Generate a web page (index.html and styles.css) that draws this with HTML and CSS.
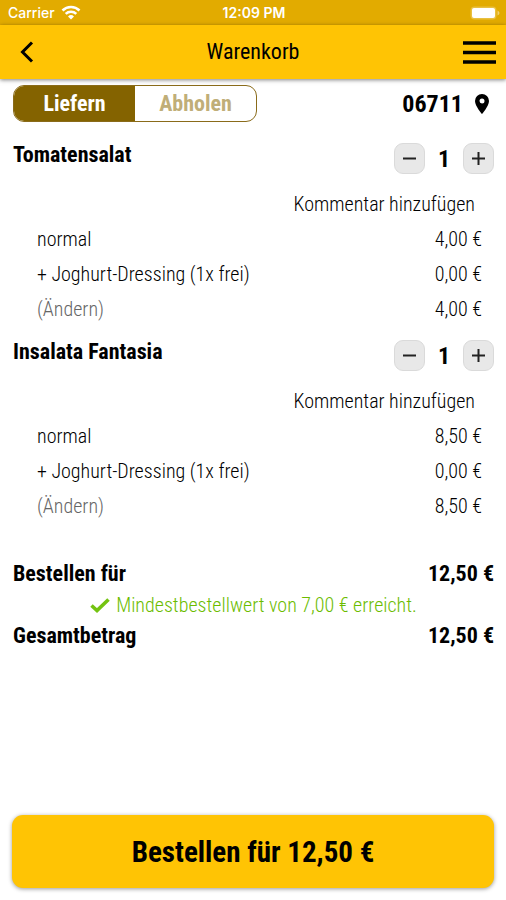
FILE: index.html
```html
<!DOCTYPE html>
<html lang="de">
<head>
<meta charset="utf-8">
<meta name="viewport" content="width=device-width, initial-scale=1">
<title>Warenkorb</title>
<link rel="stylesheet" href="styles.css">
</head>
<body>
<div class="app">
  <div class="status">
    <span class="carrier">Carrier
      <svg width="20" height="15" viewBox="0 0 20 15" aria-hidden="true"><g fill="none" stroke="#fff" stroke-width="2.6"><path d="M1.500 5.500a12.200 12.200 0 0 1 17 0"/><path d="M4.700 8.900a7.700 7.700 0 0 1 10.600 0"/></g><path d="M10 14.500 7 11.500a4.300 4.300 0 0 1 6 0z" fill="#fff"/></svg>
    </span>
    <span class="clock">12:09 PM</span>
    <svg class="battery" width="30" height="14" viewBox="0 0 30 14" aria-hidden="true"><rect x=".5" y=".5" width="26" height="13" rx="4" fill="#fff" fill-opacity=".25"/><rect x="2" y="2" width="23" height="10" rx="2" fill="#fff"/><path d="M27.500 4.500q2 1 2 2.500t-2 2.500z" fill="#fff" fill-opacity=".45"/></svg>
  </div>
  <header class="bar">
    <button class="icon-button back" type="button" aria-label="Zurück"><svg width="14" height="22" viewBox="0 0 14 22"><path d="M12 1.500 2.500 11l9.500 9.500" fill="none" stroke="#000" stroke-width="3"/></svg></button>
    <h1 class="title">Warenkorb</h1>
    <button class="icon-button menu" type="button" aria-label="Menü"><svg width="33" height="23" viewBox="0 0 33 23"><path d="M0 2h33M0 11.500h33M0 21h33" stroke="#000" stroke-width="3.400"/></svg></button>
  </header>
  <main class="content">
    <div class="delivery">
      <div class="toggle">
        <button class="option selected" type="button" aria-pressed="true">Liefern</button>
        <button class="option" type="button" aria-pressed="false">Abholen</button>
      </div>
      <button class="location" type="button">06711
        <svg width="14" height="20" viewBox="0 0 14 20" aria-hidden="true"><path fill="#000" fill-rule="evenodd" d="M7 0a7 7 0 0 0-7 7c0 5 7 13 7 13s7-8 7-13a7 7 0 0 0-7-7zm0 4.500a2.500 2.500 0 1 1 0 5 2.500 2.500 0 0 1 0-5z"/></svg>
      </button>
    </div>

    <section class="item">
      <div class="item-head">
        <h2 class="name">Tomatensalat</h2>
        <div class="stepper">
          <button class="step" type="button" aria-label="Weniger"><svg width="13" height="13" viewBox="0 0 13 13"><path d="M0 6.500h13" stroke="#222" stroke-width="2"/></svg></button>
          <span class="count">1</span>
          <button class="step" type="button" aria-label="Mehr"><svg width="13" height="13" viewBox="0 0 13 13"><path d="M0 6.500h13M6.500 0v13" stroke="#222" stroke-width="2"/></svg></button>
        </div>
      </div>
      <button class="comment" type="button">Kommentar hinzufügen</button>
      <div class="line"><span>normal</span><span>4,00 €</span></div>
      <div class="line"><span>+ Joghurt-Dressing (1x frei)</span><span>0,00 €</span></div>
      <div class="line"><button class="edit" type="button">(Ändern)</button><span>4,00 €</span></div>
    </section>

    <section class="item">
      <div class="item-head">
        <h2 class="name">Insalata Fantasia</h2>
        <div class="stepper">
          <button class="step" type="button" aria-label="Weniger"><svg width="13" height="13" viewBox="0 0 13 13"><path d="M0 6.500h13" stroke="#222" stroke-width="2"/></svg></button>
          <span class="count">1</span>
          <button class="step" type="button" aria-label="Mehr"><svg width="13" height="13" viewBox="0 0 13 13"><path d="M0 6.500h13M6.500 0v13" stroke="#222" stroke-width="2"/></svg></button>
        </div>
      </div>
      <button class="comment" type="button">Kommentar hinzufügen</button>
      <div class="line"><span>normal</span><span>8,50 €</span></div>
      <div class="line"><span>+ Joghurt-Dressing (1x frei)</span><span>0,00 €</span></div>
      <div class="line"><button class="edit" type="button">(Ändern)</button><span>8,50 €</span></div>
    </section>

    <section class="totals">
      <div class="total"><span>Bestellen für</span><span>12,50 €</span></div>
      <p class="minimum"><svg width="20" height="15" viewBox="0 0 20 15" aria-hidden="true"><path d="M1.500 7.500 7 12.500 18.500 1.500" fill="none" stroke="#74c311" stroke-width="3.600"/></svg>Mindestbestellwert von 7,00 € erreicht.</p>
      <div class="total"><span>Gesamtbetrag</span><span>12,50 €</span></div>
    </section>
  </main>
  <footer class="footer"><button class="order" type="button">Bestellen für 12,50 €</button></footer>
</div>
</body>
</html>
```
FILE: styles.css
```css
* { box-sizing: border-box; }
body {
  margin: 0;
  background: #fff;
  color: #000;
  font-family: "Roboto Condensed", "Liberation Sans Narrow", Roboto, sans-serif;
  font-size: 20px;
  font-weight: 300;
  line-height: 24px;
}
button {
  padding: 0;
  border: 0;
  background: none;
  color: inherit;
  font: inherit;
  cursor: pointer;
}
svg { display: block; flex: none; }
h1, h2, p { margin: 0; }

.app { display: flex; flex-direction: column; min-height: 100vh; }

.status {
  display: grid;
  grid-template-columns: 1fr auto 1fr;
  align-items: center;
  height: 25px;
  padding: 0 6px 0 8px;
  background: #e2ab00;
  color: #fff;
  font: 500 14px/25px Inter, sans-serif;
}
.carrier { display: flex; align-items: center; gap: 6px; }
.clock { font-weight: 600; }
.battery { justify-self: end; }

.bar {
  display: grid;
  grid-template-columns: 1fr auto 1fr;
  align-items: center;
  height: 54px;
  padding: 0 10px;
  background: #ffc404;
  box-shadow: 0 1px 4px rgba(0, 0, 0, .5);
}
.icon-button { justify-self: start; }
.back { padding: 0 10px; }
.menu { justify-self: end; }
.title { font-size: 22px; font-weight: 400; }

.content { flex: 1; padding: 6px 12px 0 13px; }
.delivery { display: flex; justify-content: space-between; align-items: center; }
.toggle {
  display: flex;
  width: 244px;
  height: 37px;
  border: 1px solid #8a6b1a;
  border-radius: 11px;
  overflow: hidden;
}
.option { flex: 1; color: #c0ae78; font-size: 22px; font-weight: 700; }
.selected { background: #846300; color: #fff; }
.location {
  display: flex;
  align-items: center;
  gap: 12px;
  padding-right: 5px;
  font-size: 24px;
  font-weight: 700;
}

.item { padding-top: 9px; }
.delivery + .item { padding-top: 16px; }
.item-head { display: flex; justify-content: space-between; height: 41px; padding-top: 5px; }
.name { font-size: 22px; font-weight: 700; }
.stepper { display: flex; gap: 13px; height: 31px; align-items: center; }
.step {
  display: grid;
  place-items: center;
  width: 31px;
  height: 31px;
  border: 1px solid #dadada;
  border-radius: 9px;
  background: #e8e8e8;
}
.count { width: 12px; font-size: 24px; font-weight: 700; text-align: center; }
.comment { display: block; height: 35px; margin: 7px 19px 0 auto; }
.line {
  display: flex;
  justify-content: space-between;
  align-items: center;
  height: 35px;
  padding: 0 12px 0 24px;
}
.edit { color: #666; }

.totals { padding-top: 35px; }
.total { display: flex; justify-content: space-between; font-size: 22px; font-weight: 700; line-height: 32px; }
.minimum { display: flex; align-items: center; justify-content: center; gap: 6px; color: #6cbc00; line-height: 30px; }

.footer { padding: 12px; }
.order {
  width: 100%;
  height: 73px;
  border-radius: 11px;
  background: #ffc404;
  box-shadow: 0 1px 4px rgba(0, 0, 0, .4);
  font-size: 29px;
  font-weight: 700;
}
```
